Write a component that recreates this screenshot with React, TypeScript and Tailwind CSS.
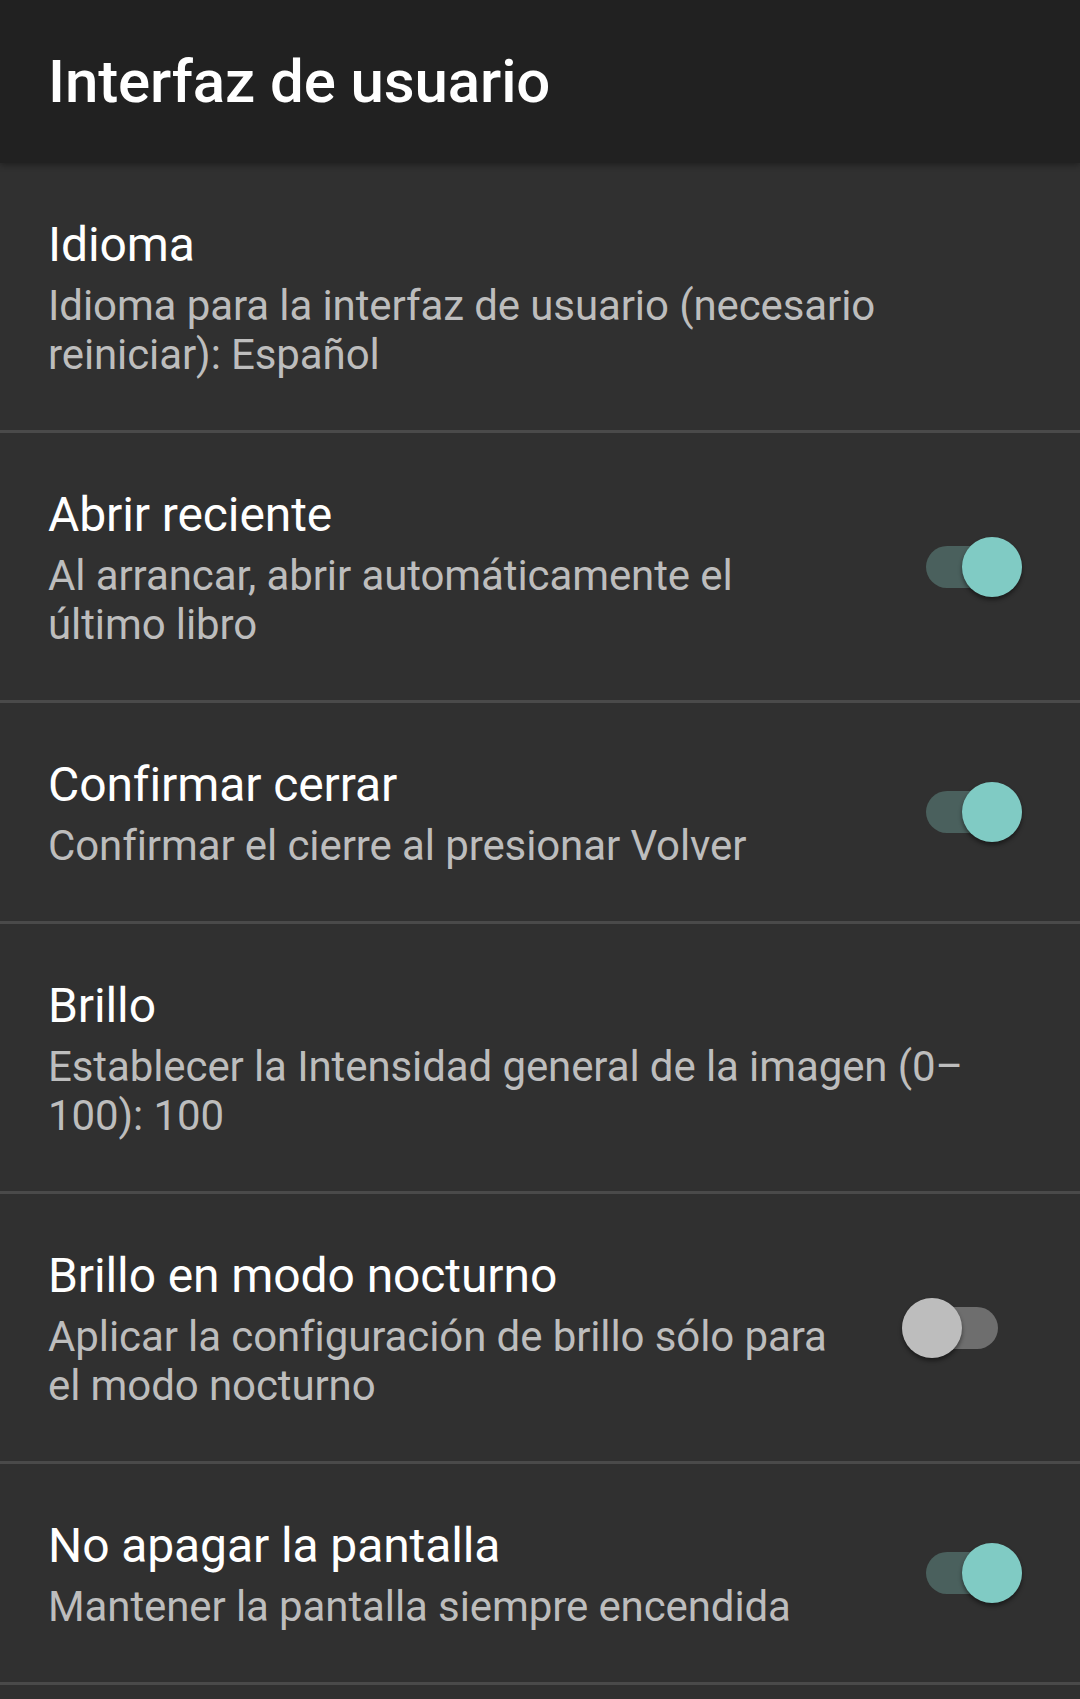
import React from 'react';

type Pref = {
  title: string;
  summary: React.ReactNode;
  toggle?: 'on' | 'off';
};

const Toggle = ({ on }: { on: boolean }) => {
  if (on) {
    return (
      <div className="relative w-[96px] h-[60px] flex items-center mr-[58px] shrink-0">
        <div className="w-[96px] h-[42px] rounded-full bg-[#4a605d]" />
        <div className="absolute right-0 top-0 w-[60px] h-[60px] rounded-full bg-[#80cbc4] shadow-[0_3px_4px_rgba(0,0,0,0.45)]" />
      </div>
    );
  }
  return (
    <div className="relative w-[96px] h-[60px] flex items-center mr-[82px] shrink-0">
      <div className="w-[96px] h-[42px] rounded-full bg-[#6e6e6e]" />
      <div className="absolute left-0 top-0 w-[60px] h-[60px] rounded-full bg-[#bdbdbd] shadow-[0_3px_4px_rgba(0,0,0,0.45)]" />
    </div>
  );
};

const App = () => {
  const prefs: Pref[] = [
    {
      title: 'Idioma',
      summary: (
        <>
          Idioma para la interfaz de usuario (necesario
          <br />
          reiniciar): Español
        </>
      ),
    },
    {
      title: 'Abrir reciente',
      summary: (
        <>
          Al arrancar, abrir automáticamente el
          <br />
          último libro
        </>
      ),
      toggle: 'on',
    },
    {
      title: 'Confirmar cerrar',
      summary: 'Confirmar el cierre al presionar Volver',
      toggle: 'on',
    },
    {
      title: 'Brillo',
      summary: (
        <>
          Establecer la Intensidad general de la imagen (0–
          <br />
          100): 100
        </>
      ),
    },
    {
      title: 'Brillo en modo nocturno',
      summary: (
        <>
          Aplicar la configuración de brillo sólo para
          <br />
          el modo nocturno
        </>
      ),
      toggle: 'off',
    },
    {
      title: 'No apagar la pantalla',
      summary: 'Mantener la pantalla siempre encendida',
      toggle: 'on',
    },
  ];

  return (
    <div
      className="w-[1080px] h-[1699px] overflow-hidden bg-[#303030]"
      style={{ fontFamily: 'Roboto, "Noto Sans", sans-serif' }}
    >
      {/* Toolbar */}
      <header className="relative z-10 h-[163px] bg-[#212121] flex items-center px-[48px] shadow-[0_2px_6px_rgba(0,0,0,0.35)]">
        <h1 className="text-[60px] font-medium text-white leading-normal tracking-[-0.1px] whitespace-nowrap">
          Interfaz de usuario
        </h1>
      </header>

      {/* Preferences */}
      <div className="flex flex-col">
        {prefs.map((pref, index) => (
          <div key={index} className="flex flex-col">
            <div className="flex items-center">
              <div className="flex-1 pl-[48px] pt-[54px] pb-[51px] flex flex-col gap-[8px]">
                <div className="text-[48px] leading-[56px] text-white tracking-[-0.1px] whitespace-nowrap">
                  {pref.title}
                </div>
                <div className="text-[42px] leading-[49px] text-[#bdbdbd] tracking-[-0.1px] whitespace-nowrap">
                  {pref.summary}
                </div>
              </div>
              {pref.toggle && <Toggle on={pref.toggle === 'on'} />}
            </div>
            <div className="h-[3px] bg-[#4a4a4a]" />
          </div>
        ))}
      </div>
    </div>
  );
};

export default App;
